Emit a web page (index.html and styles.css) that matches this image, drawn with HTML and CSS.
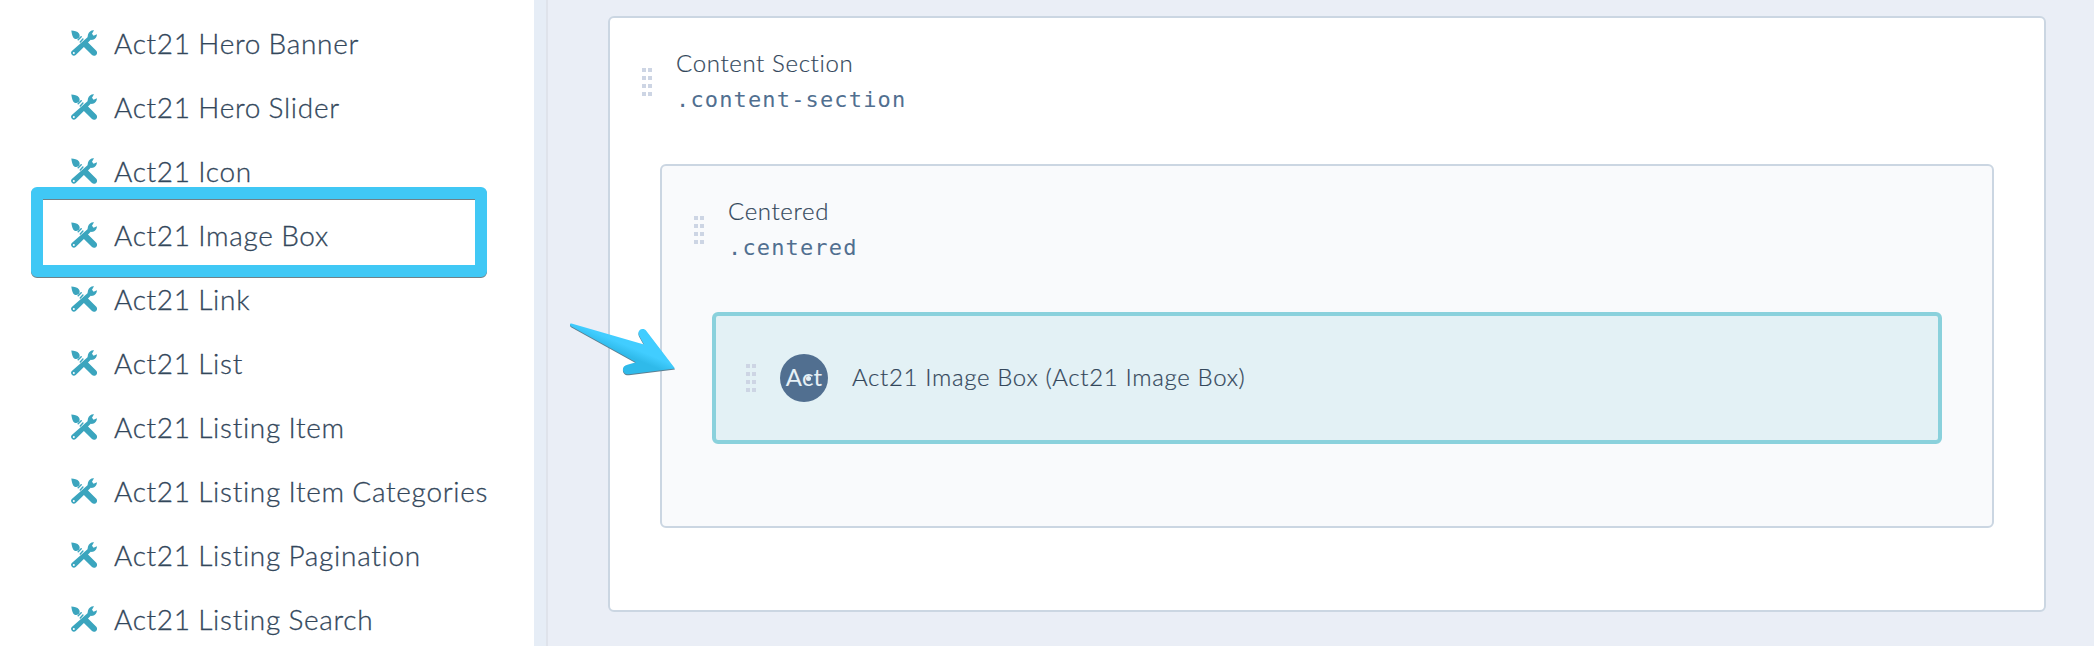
FILE: index.html
```html
<!DOCTYPE html>
<html lang="en">
<head>
    <meta charset="UTF-8">
    <meta name="viewport" content="width=device-width, initial-scale=1.0">
    <title>Layout Editor</title>
    <link rel="stylesheet" href="styles.css">
</head>
<body>
    <svg class="defs" width="0" height="0">
        <symbol id="tools" viewBox="0 0 26 26">
            <path d="M.3.6C3 1 6.500 1.400 8 3.500c1.300 1.900.7 3.800-.7 4.800-1.600 1.100-3.700.8-4.900-.6C1 6 .8 3 .3.600z"/>
            <path d="M7.200 9.800l3-3M9.300 11.900l2.600-2.800" stroke="currentColor" stroke-width="1.500" stroke-linecap="round"/>
            <path d="M17 4.500c.8-2.800 3.300-4.500 6-4.200L21 3.800l1.600 1.900 3.300-1.500c.2 3.400-2.800 6.200-6.200 5.600L17 12.400l8.300 8.300c2.500 3-1.500 6.600-4.300 4.400L12.900 17 4.700 25.100C2 27.200-1.600 23.600.8 20.900L16.500 7.200z"/>
            <circle cx="2.800" cy="23" r="1" fill="#fff"/>
        </symbol>
    </svg>

    <div class="page">
        <div class="sidebar">
            <ul class="modules">
                <li><svg class="icon"><use href="#tools"/></svg><span>Act21 Hero Banner</span></li>
                <li><svg class="icon"><use href="#tools"/></svg><span>Act21 Hero Slider</span></li>
                <li><svg class="icon"><use href="#tools"/></svg><span>Act21 Icon</span></li>
                <li class="selected"><svg class="icon"><use href="#tools"/></svg><span>Act21 Image Box</span></li>
                <li><svg class="icon"><use href="#tools"/></svg><span>Act21 Link</span></li>
                <li><svg class="icon"><use href="#tools"/></svg><span>Act21 List</span></li>
                <li><svg class="icon"><use href="#tools"/></svg><span>Act21 Listing Item</span></li>
                <li><svg class="icon"><use href="#tools"/></svg><span>Act21 Listing Item Categories</span></li>
                <li><svg class="icon"><use href="#tools"/></svg><span>Act21 Listing Pagination</span></li>
                <li><svg class="icon"><use href="#tools"/></svg><span>Act21 Listing Search</span></li>
            </ul>
        </div>
        <div class="divider"></div>

        <div class="canvas">
            <div class="group">
                <div class="group-head">
                    <div class="handle"><i></i><i></i><i></i><i></i><i></i><i></i><i></i><i></i></div>
                    <div>
                        <div class="name">Content Section</div>
                        <div class="selector">.content-section</div>
                    </div>
                </div>

                <div class="group inner">
                    <div class="group-head">
                        <div class="handle"><i></i><i></i><i></i><i></i><i></i><i></i><i></i><i></i></div>
                        <div>
                            <div class="name">Centered</div>
                            <div class="selector">.centered</div>
                        </div>
                    </div>

                    <div class="module">
                        <div class="handle"><i></i><i></i><i></i><i></i><i></i><i></i><i></i><i></i></div>
                        <div class="avatar"><span>A</span><span class="c">c</span><span>t</span></div>
                        <div class="name">Act21 Image Box (Act21 Image Box)</div>
                    </div>
                </div>
            </div>
        </div>

        <svg class="arrow" width="112" height="60" viewBox="0 0 112 60">
            <defs>
                <linearGradient id="shade" gradientUnits="userSpaceOnUse" x1="68" y1="14" x2="56" y2="43">
                    <stop offset="0.45" stop-color="#41cdff"/>
                    <stop offset="0.75" stop-color="#2fbaea"/>
                </linearGradient>
            </defs>
            <path fill="url(#shade)" d="M3.500 3.500L76 24.600l-5-9.200c-1.500-3.200.2-6.400 3.600-6.400 1.600 0 2.800.6 3.800 2L107 48.500l-46 5.800c-7.200.8-8.400-8.500-1.600-9.600l8.600-2.400L3 6.300C1.200 5 1.900 3.200 3.500 3.500z"/>
        </svg>
    </div>
</body>
</html>
```

FILE: styles.css
```css
* {
    box-sizing: border-box;
}

body {
    margin: 0;
    font-family: Lato, sans-serif;
    font-weight: 300;
    color: #33475b;
    background: #eaeef6;
    overflow: hidden;
}

.defs {
    position: absolute;
}

.page {
    position: relative;
    display: flex;
    height: 646px;
    overflow: hidden;
}

.sidebar {
    width: 534px;
    background: #ffffff;
}

.divider {
    width: 14px;
    background: #e6edf6;
    border-right: 2px solid #dfe3eb;
}

.modules {
    margin: 0;
    padding: 12px 0 0 71px;
    list-style: none;
}

.modules li {
    position: relative;
    display: flex;
    align-items: center;
    gap: 17px;
    height: 64px;
    font-size: 28px;
    letter-spacing: 0.7px;
    word-spacing: -0.8px;
    white-space: nowrap;
    -webkit-text-stroke: 0.3px;
}

.modules span {
    padding-bottom: 2px;
}

.icon {
    width: 26px;
    height: 26px;
    margin-bottom: 2px;
    color: #3ba5be;
    fill: currentColor;
}

.selected::after {
    content: "";
    box-sizing: border-box;
    position: absolute;
    top: -17px;
    left: -40px;
    width: 456px;
    height: 90px;
    border: 12px solid #40c8f5;
    border-radius: 6px;
    filter: drop-shadow(0 1px 0 #6f8188);
}

.canvas {
    flex: 1;
    padding: 16px 48px 34px 60px;
}

.group {
    padding: 28px 50px 82px;
    background: #ffffff;
    border: 2px solid #cbd6e2;
    border-radius: 6px;
}

.inner {
    background: #f9fafc;
}

.group-head {
    display: flex;
    align-items: center;
    gap: 24px;
    height: 72px;
    margin: 0 0 46px -18px;
}

.handle {
    display: grid;
    grid-template-columns: 4px 4px;
    grid-auto-rows: 4px;
    gap: 4px 2px;
}

.handle i {
    background: #cdd5e4;
}

.name {
    padding-bottom: 2px;
    font-size: 24px;
    line-height: 34px;
    letter-spacing: 0.65px;
    white-space: nowrap;
    -webkit-text-stroke: 0.2px;
}

.selector {
    font-family: "DejaVu Sans Mono", monospace;
    font-size: 22px;
    font-weight: 400;
    line-height: 36px;
    letter-spacing: 1.15px;
    color: #516f90;
}

.module {
    display: flex;
    align-items: center;
    gap: 24px;
    height: 132px;
    padding-left: 30px;
    background: #e3f1f5;
    border: 4px solid #8ad1dc;
    border-radius: 6px;
}

.avatar {
    display: flex;
    justify-content: center;
    width: 48px;
    height: 48px;
    border-radius: 50%;
    background: #516f90;
    color: #e6f1f7;
    font-size: 24px;
    font-weight: 400;
    line-height: 45px;
}

.avatar .c {
    position: relative;
}

.avatar .c::after {
    content: "";
    position: absolute;
    top: 22px;
    left: 4px;
    width: 5px;
    height: 5px;
    border-radius: 50%;
    background: #e6f1f7;
}

.arrow {
    position: absolute;
    top: 320px;
    left: 568px;
    filter: drop-shadow(0 1px 0 #5d7f90);
}
```
